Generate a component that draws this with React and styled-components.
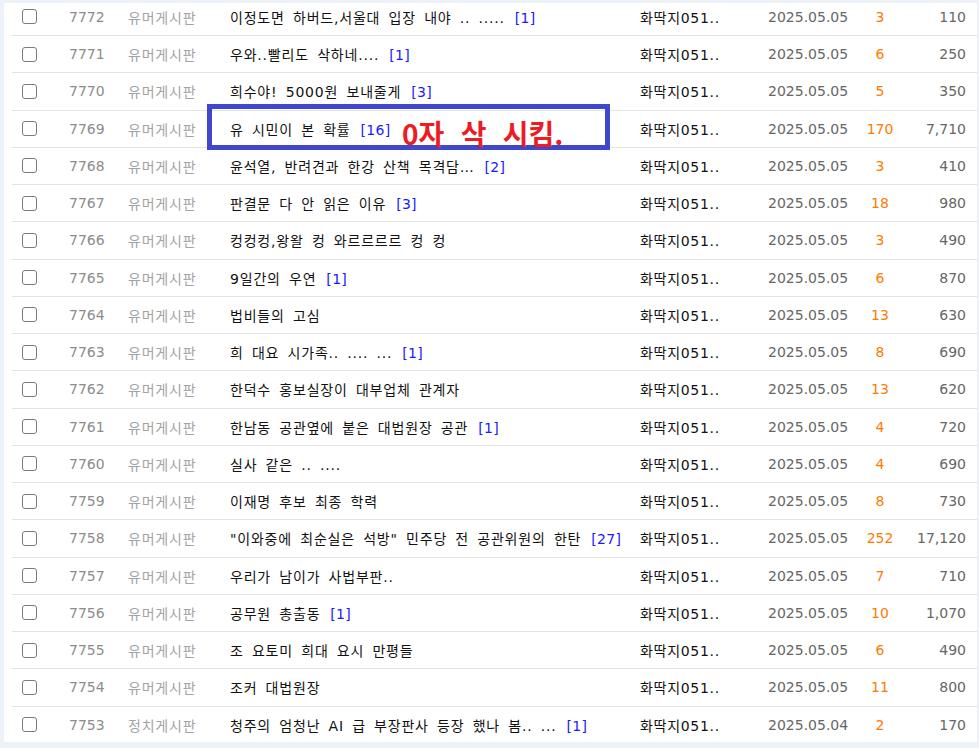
import React from 'react';
import styled, { createGlobalStyle } from 'styled-components';

const GlobalStyle = createGlobalStyle`
  html, body {
    margin: 0;
    padding: 0;
    background: #edf2f8;
  }
  body {
    font-family: 'DejaVu Sans', 'Noto Sans CJK KR', sans-serif;
    font-size: 14px;
  }
`;

const posts = [
  { id: 7772, board: '유머게시판', title: '이정도면 하버드,서울대 입장 내야 .. .....', reply: 1, date: '2025.05.05', comments: 3, views: '110' },
  { id: 7771, board: '유머게시판', title: '우와..빨리도 삭하네....', reply: 1, date: '2025.05.05', comments: 6, views: '250' },
  { id: 7770, board: '유머게시판', title: '희수야! 5000원 보내줄게', reply: 3, date: '2025.05.05', comments: 5, views: '350' },
  { id: 7769, board: '유머게시판', title: '유 시민이 본 확률', reply: 16, date: '2025.05.05', comments: 170, views: '7,710' },
  { id: 7768, board: '유머게시판', title: '윤석열, 반려견과 한강 산책 목격담…', reply: 2, date: '2025.05.05', comments: 3, views: '410' },
  { id: 7767, board: '유머게시판', title: '판결문 다 안 읽은 이유', reply: 3, date: '2025.05.05', comments: 18, views: '980' },
  { id: 7766, board: '유머게시판', title: '컹컹컹,왕왈 컹 와르르르르 컹 컹', date: '2025.05.05', comments: 3, views: '490' },
  { id: 7765, board: '유머게시판', title: '9일간의 우연', reply: 1, date: '2025.05.05', comments: 6, views: '870' },
  { id: 7764, board: '유머게시판', title: '법비들의 고심', date: '2025.05.05', comments: 13, views: '630' },
  { id: 7763, board: '유머게시판', title: '희 대요 시가족.. .... ...', reply: 1, date: '2025.05.05', comments: 8, views: '690' },
  { id: 7762, board: '유머게시판', title: '한덕수 홍보실장이 대부업체 관계자', date: '2025.05.05', comments: 13, views: '620' },
  { id: 7761, board: '유머게시판', title: '한남동 공관옆에 붙은 대법원장 공관', reply: 1, date: '2025.05.05', comments: 4, views: '720' },
  { id: 7760, board: '유머게시판', title: '실사 같은 .. ....', date: '2025.05.05', comments: 4, views: '690' },
  { id: 7759, board: '유머게시판', title: '이재명 후보 최종 학력', date: '2025.05.05', comments: 8, views: '730' },
  { id: 7758, board: '유머게시판', title: '"이와중에 최순실은 석방" 민주당 전 공관위원의 한탄', reply: 27, date: '2025.05.05', comments: 252, views: '17,120' },
  { id: 7757, board: '유머게시판', title: '우리가 남이가 사법부판..', date: '2025.05.05', comments: 7, views: '710' },
  { id: 7756, board: '유머게시판', title: '공무원 총출동', reply: 1, date: '2025.05.05', comments: 10, views: '1,070' },
  { id: 7755, board: '유머게시판', title: '조 요토미 희대 요시 만평들', date: '2025.05.05', comments: 6, views: '490' },
  { id: 7754, board: '유머게시판', title: '조커 대법원장', date: '2025.05.05', comments: 11, views: '800' },
  { id: 7753, board: '정치게시판', title: '청주의 엄청난 AI 급 부장판사 등장 했나 봄.. ...', reply: 1, date: '2025.05.04', comments: 2, views: '170' },
];

const Panel = styled.div`
  position: relative;
  margin: 3px 2px 0 4px;
  width: 973px;
  height: 739px;
  background: #fff;
  overflow: hidden;
`;

const List = styled.ul`
  list-style: none;
  margin: -4.25px 0 0 8px;
  padding: 0;
`;

const Row = styled.li`
  display: grid;
  grid-template-columns: 57px 59px 102px 410px 128px 92px 40px 66px;
  align-items: center;
  height: 36.25px;
  border-bottom: 1px solid #e3e3e3;
  white-space: nowrap;
`;

const CheckCell = styled.div`
  padding-left: 10px;
  display: flex;
  align-items: center;
`;

const Check = styled.span`
  display: block;
  width: 13px;
  height: 13px;
  border: 1px solid #7b7b7b;
  border-radius: 3px;
  background: #fff;
`;

const Num = styled.span`
  color: #8c8c8c;
`;

const Board = styled.span`
  color: #a3a3a3;
  letter-spacing: 0.8px;
`;

const Title = styled.span`
  color: #111;
  letter-spacing: 0.8px;
  word-spacing: 3px;
  overflow: hidden;
`;

const Reply = styled.span`
  color: #1a1aff;
  margin-left: 10px;
  letter-spacing: 0.3px;
`;

const Author = styled.span`
  color: #111;
  letter-spacing: 0.7px;
`;

const DateText = styled.span`
  color: #666;
`;

const Comments = styled.span`
  color: #ff7a00;
  text-align: center;
`;

const Views = styled.span`
  color: #666;
  text-align: right;
`;

const Mark = styled.div`
  position: absolute;
  left: 203px;
  top: 101px;
  width: 393px;
  height: 36px;
  border: 5px solid #3f48cc;
`;

const MarkText = styled.span`
  position: absolute;
  left: 398px;
  top: 113px;
  color: #ed1c24;
  font-family: 'Noto Sans CJK KR', sans-serif;
  font-weight: 700;
  font-size: 28px;
  line-height: 34px;
  word-spacing: 10px;
  white-space: pre;
`;

export default function App() {
  return (
    <>
      <GlobalStyle />
      <Panel>
        <List>
          {posts.map((p) => (
            <Row key={p.id}>
              <CheckCell>
                <Check />
              </CheckCell>
              <Num>{p.id}</Num>
              <Board>{p.board}</Board>
              <Title>
                {p.title}
                {p.reply ? <Reply>[{p.reply}]</Reply> : null}
              </Title>
              <Author>화딱지051..</Author>
              <DateText>{p.date}</DateText>
              <Comments>{p.comments}</Comments>
              <Views>{p.views}</Views>
            </Row>
          ))}
        </List>
        <Mark />
        <MarkText>0자 삭 시킴.</MarkText>
      </Panel>
    </>
  );
}
